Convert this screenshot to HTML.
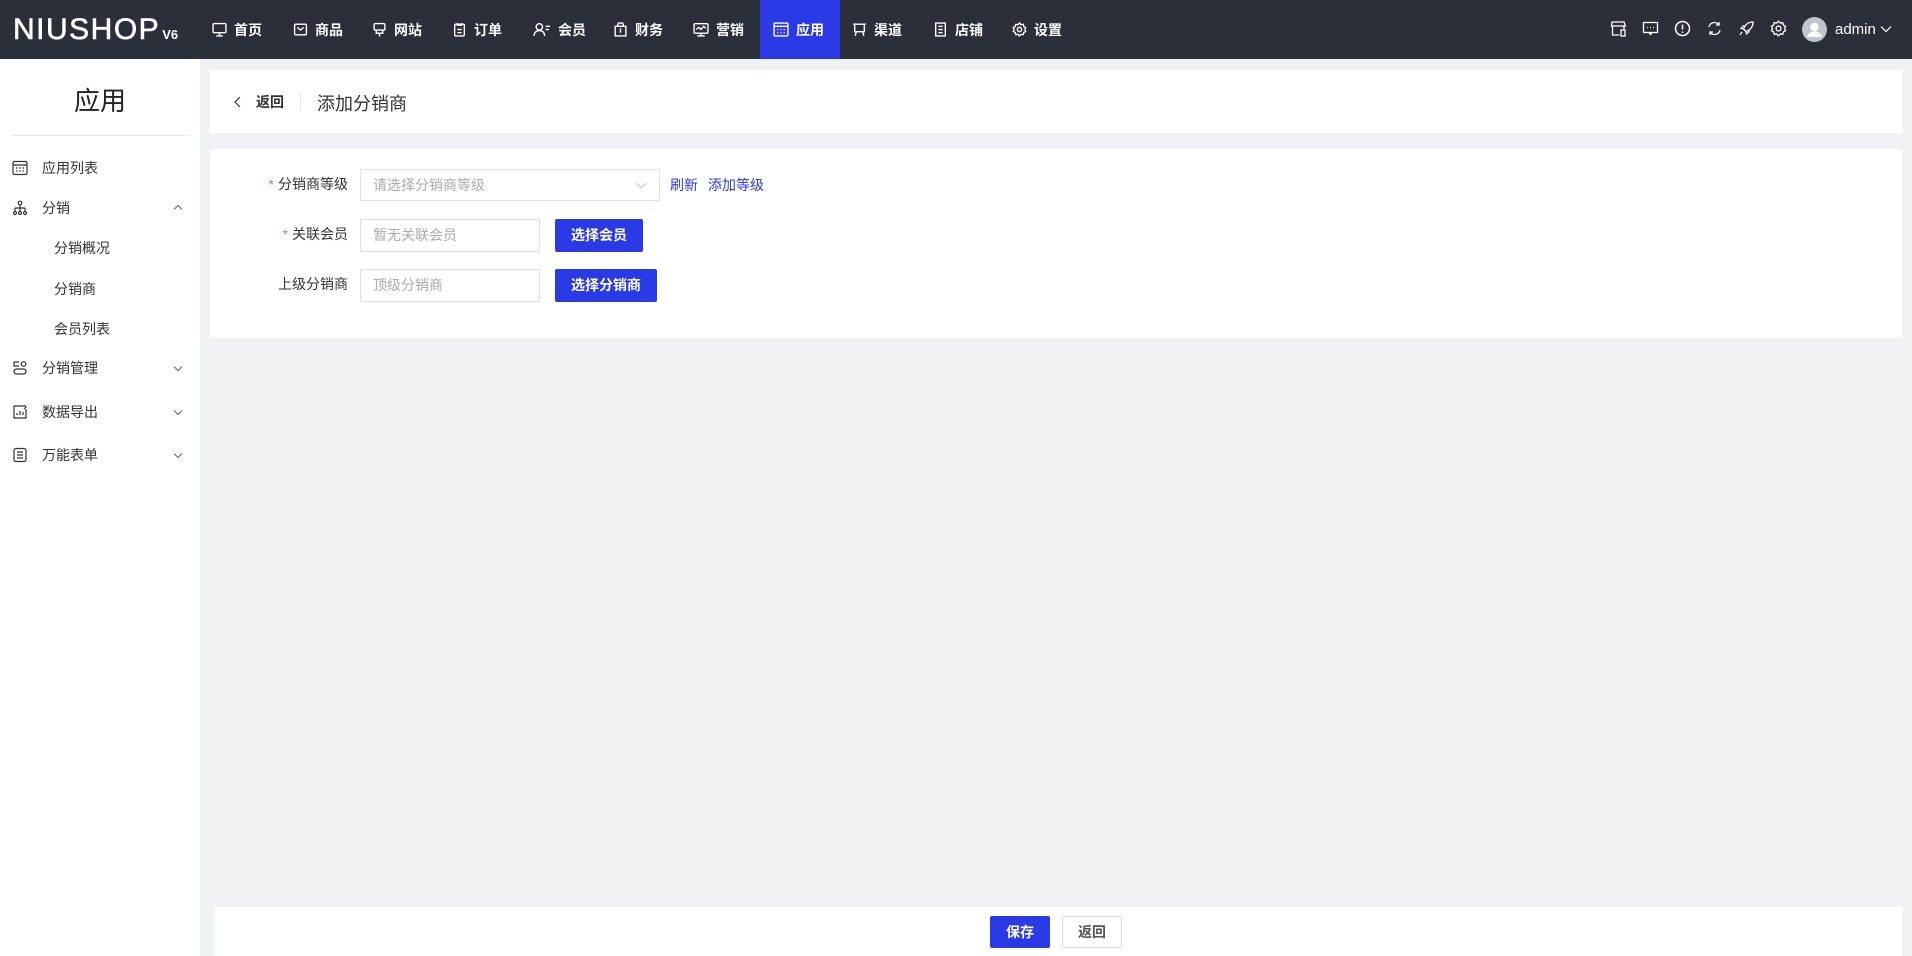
<!DOCTYPE html>
<html><head><meta charset="utf-8"><style>
*{box-sizing:border-box;margin:0;padding:0}
body{width:1912px;height:956px;overflow:hidden;background:#f0f2f5;font-family:"Liberation Sans","Noto Sans CJK SC",sans-serif;color:#333;font-size:14px;position:relative}
.top{position:absolute;left:0;top:0;width:1912px;height:59px;background:#2b2f3a;color:#fff}
.logo{position:absolute;left:13px;top:13px;font-size:30px;font-weight:normal;letter-spacing:1.5px;color:#fff;-webkit-text-stroke:0.6px #fff}
.logo small{font-size:13px;margin-left:2px;letter-spacing:0;font-weight:bold;-webkit-text-stroke:0}
.nav{position:absolute;top:0;height:59px;display:flex;align-items:center;font-size:14px;font-weight:bold;color:#fff}
.nav svg{margin-right:7px}
.active{position:absolute;left:760px;top:0;width:80px;height:59px;background:#2a3ae6}
.ri{position:absolute;top:20px}
.side{position:absolute;left:0;top:59px;width:200px;height:897px;background:#fff}
.side h1{position:absolute;left:0;width:200px;top:22px;text-align:center;font-size:26px;font-weight:normal;color:#222}
.side .hr{position:absolute;left:12px;top:76px;width:177px;height:1px;background:#e8e8e8}
.mi{position:absolute;left:0;width:200px;height:20px;line-height:20px;font-size:14px;color:#333}
.mi svg{position:absolute;left:12px;top:2px}
.mi .t{position:absolute;left:42px}
.mi .s{position:absolute;left:54px}
.card1{position:absolute;left:210px;top:70px;width:1692px;height:63px;background:#fff}
.card2{position:absolute;left:210px;top:149px;width:1692px;height:189px;background:#fff}
.lab{position:absolute;text-align:right;width:140px;left:208px;font-size:14px;color:#333;line-height:20px}
.lab i{color:#f56c6c;font-style:normal;margin-right:4px}
.inp{position:absolute;border:1px solid #dcdfe6;background:#fff;color:#a8abb2;padding-left:12px;font-size:14px}
.btn{position:absolute;background:#2a3ae6;color:#fff;font-weight:bold;font-size:14px;text-align:center;border-radius:2px}
.foot{position:absolute;left:215px;top:907px;width:1687px;height:49px;background:#fff}
</style></head><body>
<div class="top">
 <div class="logo">NIUSHOP<small>V6</small></div>
 <div class="active"></div>
 <div class="nav" style="left:212px"><svg width="15" height="15" viewBox="0 0 14 14" fill="none" stroke="#fff" stroke-width="1.3"><rect x="1" y="1.5" width="12" height="8.5" rx="1"/><path d="M7 10v3M4 13h6"/></svg>首页</div>
 <div class="nav" style="left:293px"><svg width="15" height="15" viewBox="0 0 14 14" fill="none" stroke="#fff" stroke-width="1.3"><rect x="1.5" y="2" width="11" height="10" rx="1"/><path d="M4 5l3 2.5L10 5"/></svg>商品</div>
 <div class="nav" style="left:372px"><svg width="15" height="15" viewBox="0 0 14 14" fill="none" stroke="#fff" stroke-width="1.3"><rect x="2" y="1.5" width="10" height="6" rx="1"/><path d="M4 7.5v3h6v-3M7 10.5v3"/></svg>网站</div>
 <div class="nav" style="left:452px"><svg width="15" height="15" viewBox="0 0 14 14" fill="none" stroke="#fff" stroke-width="1.3"><rect x="2.5" y="2" width="9" height="11" rx="1"/><path d="M5 1v2h4V1M5 7h4M5 10h4"/></svg>订单</div>
 <div class="nav" style="left:533px"><svg width="18" height="15" viewBox="0 0 17 14" fill="none" stroke="#fff" stroke-width="1.3"><circle cx="6" cy="4.5" r="3"/><path d="M1 13c0-3 2-5 5-5s5 2 5 5M12 4h4M12 7h3"/></svg>会员</div>
 <div class="nav" style="left:613px"><svg width="15" height="15" viewBox="0 0 14 14" fill="none" stroke="#fff" stroke-width="1.3"><path d="M2 4h10v9H2zM4 4l1-3h4l1 3M7 6v4"/></svg>财务</div>
 <div class="nav" style="left:693px"><svg width="16" height="15" viewBox="0 0 15 14" fill="none" stroke="#fff" stroke-width="1.3"><rect x="1" y="1.5" width="13" height="9" rx="1"/><path d="M3 7l2.5-2 2 2 2.5-3 2 2M7.5 10.5v2.5M4 13h7"/></svg>营销</div>
 <div class="nav" style="left:773px"><svg width="16" height="15" viewBox="0 0 15 14" fill="none" stroke="#fff" stroke-width="1.3"><rect x="1" y="1" width="13" height="12" rx="1"/><path d="M1 4h13M4 7h1M7 7h1M10 7h1M4 10h1M7 10h1M10 10h1"/></svg>应用</div>
 <div class="nav" style="left:852px"><svg width="15" height="15" viewBox="0 0 14 14" fill="none" stroke="#fff" stroke-width="1.3"><path d="M1 2h12M2.5 2v7h9V2M4 9l-1 4M10 9l1 4"/></svg>渠道</div>
 <div class="nav" style="left:933px"><svg width="15" height="15" viewBox="0 0 14 14" fill="none" stroke="#fff" stroke-width="1.3"><rect x="2.5" y="1" width="9" height="12"/><path d="M5 4h4M5 7h4M5 10h4"/></svg>店铺</div>
 <div class="nav" style="left:1012px"><svg width="15" height="15" viewBox="0 0 14 14" fill="none" stroke="#fff" stroke-width="1.3"><circle cx="7" cy="7" r="2"/><path d="M7 1l1.5 1.5 2-.3.5 2 1.8 1L12 7l.8 1.8-1.8 1-.5 2-2-.3L7 13l-1.5-1.5-2 .3-.5-2-1.8-1L2 7l-.8-1.8 1.8-1 .5-2 2 .3z"/></svg>设置</div>
 <svg class="ri" style="left:1610px" width="17" height="17" viewBox="0 0 17 17" fill="none" stroke="#fff" stroke-width="1.3"><path d="M2 2h12l1.5 4h-14zM2.5 6v9h7M14 6v3"/><rect x="11" y="10" width="4" height="6"/></svg>
 <svg class="ri" style="left:1642px" width="17" height="17" viewBox="0 0 17 17" fill="none" stroke="#fff" stroke-width="1.3"><rect x="1.5" y="2.5" width="14" height="10"/><path d="M7 12.5l1.5 2 1.5-2M5 7.5h1M8 7.5h1M11 7.5h1"/></svg>
 <svg class="ri" style="left:1674px" width="17" height="17" viewBox="0 0 17 17" fill="none" stroke="#fff" stroke-width="1.5"><circle cx="8.5" cy="8.5" r="7"/><path d="M8.5 4.5v5M8.5 11.5v1.5"/></svg>
 <svg class="ri" style="left:1706px" width="17" height="17" viewBox="0 0 17 17" fill="none" stroke="#fff" stroke-width="1.3"><path d="M3 7a5.5 5.5 0 0 1 10-2M14 10a5.5 5.5 0 0 1-10 2M13 2v3h-3M4 15v-3h3"/></svg>
 <svg class="ri" style="left:1738px" width="17" height="17" viewBox="0 0 17 17" fill="none" stroke="#fff" stroke-width="1.3"><path d="M15 2c-5 0-8 3-9.5 7l2.5 2.5C12 10 15 7 15 2zM5.5 9L3 8.5l2-2.5h2.5M8 11.5l.5 2.5 2.5-2v-2.5M4 12l-2 3"/></svg>
 <svg class="ri" style="left:1770px" width="17" height="17" viewBox="0 0 14 14" fill="none" stroke="#fff" stroke-width="1.1"><circle cx="7" cy="7" r="2"/><path d="M7 1l1.5 1.5 2-.3.5 2 1.8 1L12 7l.8 1.8-1.8 1-.5 2-2-.3L7 13l-1.5-1.5-2 .3-.5-2-1.8-1L2 7l-.8-1.8 1.8-1 .5-2 2 .3z"/></svg>
 <svg style="position:absolute;left:1802px;top:17px" width="25" height="25" viewBox="0 0 25 25"><circle cx="12.5" cy="12.5" r="12.5" fill="#c0c4cc"/><circle cx="12.5" cy="10" r="4.2" fill="#fff"/><path d="M5 20c1-4 4-5.5 7.5-5.5S19 16 20 20z" fill="#fff"/></svg>
 <div style="position:absolute;left:1835px;top:21px;font-size:15px;color:#fff">admin</div>
 <svg style="position:absolute;left:1880px;top:25px" width="12" height="8" viewBox="0 0 12 8" fill="none" stroke="#fff" stroke-width="1.2"><path d="M1 1.5l5 5 5-5"/></svg>
</div>

<div class="side">
 <h1>应用</h1><div class="hr"></div>
 <div class="mi" style="top:99px"><svg width="16" height="16" viewBox="0 0 16 16" fill="none" stroke="#333" stroke-width="1.2"><rect x="1" y="1.5" width="14" height="13" rx="1.5"/><path d="M1 5h14M4 8h1.5M7.3 8h1.5M10.5 8H12M4 11h1.5M7.3 11h1.5M10.5 11H12"/></svg><span class="t">应用列表</span></div>
 <div class="mi" style="top:139px"><svg width="16" height="16" viewBox="0 0 16 16" fill="none" stroke="#333" stroke-width="1.2"><circle cx="8" cy="3" r="1.8"/><path d="M8 5v3M3 8h10M3 8v3M8 8v3M13 8v3"/><circle cx="3" cy="13" r="1.5"/><circle cx="8" cy="13" r="1.5"/><circle cx="13" cy="13" r="1.5"/></svg><span class="t">分销</span><svg style="left:173px;top:6px" width="10" height="7" viewBox="0 0 10 7" fill="none" stroke="#666" stroke-width="1.1"><path d="M1 5.5l4-4 4 4"/></svg></div>
 <div class="mi" style="top:179px"><span class="s">分销概况</span></div>
 <div class="mi" style="top:220px"><span class="s">分销商</span></div>
 <div class="mi" style="top:260px"><span class="s">会员列表</span></div>
 <div class="mi" style="top:299px"><svg width="16" height="16" viewBox="0 0 16 16" fill="none" stroke="#333" stroke-width="1.2"><path d="M2 2h5M2 2v4h5"/><circle cx="11.5" cy="4" r="2.3"/><rect x="2" y="9" width="12" height="5" rx="2.5"/></svg><span class="t">分销管理</span><svg style="left:173px;top:7px" width="10" height="7" viewBox="0 0 10 7" fill="none" stroke="#666" stroke-width="1.1"><path d="M1 1.5l4 4 4-4"/></svg></div>
 <div class="mi" style="top:343px"><svg width="16" height="16" viewBox="0 0 16 16" fill="none" stroke="#333" stroke-width="1.2"><path d="M12 2H2v12h12V5M5 11V9M8 11V7M11 11V8M12 1l2 2-2 2"/></svg><span class="t">数据导出</span><svg style="left:173px;top:7px" width="10" height="7" viewBox="0 0 10 7" fill="none" stroke="#666" stroke-width="1.1"><path d="M1 1.5l4 4 4-4"/></svg></div>
 <div class="mi" style="top:386px"><svg width="16" height="16" viewBox="0 0 16 16" fill="none" stroke="#333" stroke-width="1.2"><rect x="2" y="1.5" width="12" height="13" rx="2"/><path d="M5 5h6M5 8h6M5 11h6"/></svg><span class="t">万能表单</span><svg style="left:173px;top:7px" width="10" height="7" viewBox="0 0 10 7" fill="none" stroke="#666" stroke-width="1.1"><path d="M1 1.5l4 4 4-4"/></svg></div>
</div>

<div class="card1">
 <svg style="position:absolute;left:24px;top:26px" width="8" height="12" viewBox="0 0 8 12" fill="none" stroke="#333" stroke-width="1.2"><path d="M6 1L1 6l5 5"/></svg>
 <div style="position:absolute;left:46px;top:22px;font-size:14px;font-weight:bold;color:#333">返回</div>
 <div style="position:absolute;left:90px;top:23px;width:1px;height:18px;background:#e4e4e4"></div>
 <div style="position:absolute;left:107px;top:20px;font-size:18px;color:#333">添加分销商</div>
</div>

<div class="card2"></div>
<div class="lab" style="top:174px"><i>*</i>分销商等级</div>
<div class="inp" style="left:360px;top:169px;width:300px;height:32px;line-height:30px">请选择分销商等级<svg style="position:absolute;right:12px;top:12px" width="12" height="7" viewBox="0 0 12 7" fill="none" stroke="#c0c4cc" stroke-width="1.1"><path d="M1 1l5 5 5-5"/></svg></div>
<div style="position:absolute;left:670px;top:175px;color:#2a3ae6;font-size:14px">刷新</div>
<div style="position:absolute;left:708px;top:175px;color:#2a3ae6;font-size:14px">添加等级</div>

<div class="lab" style="top:224px"><i>*</i>关联会员</div>
<div class="inp" style="left:360px;top:219px;width:180px;height:33px;line-height:31px">暂无关联会员</div>
<div class="btn" style="left:555px;top:219px;width:88px;height:33px;line-height:33px">选择会员</div>

<div class="lab" style="top:274px">上级分销商</div>
<div class="inp" style="left:360px;top:269px;width:180px;height:33px;line-height:31px">顶级分销商</div>
<div class="btn" style="left:555px;top:269px;width:102px;height:33px;line-height:33px">选择分销商</div>

<div class="foot">
 <div class="btn" style="left:775px;top:9px;width:60px;height:32px;line-height:32px">保存</div>
 <div style="position:absolute;left:847px;top:9px;width:60px;height:32px;line-height:30px;border:1px solid #dcdfe6;text-align:center;font-weight:bold;color:#555;border-radius:2px">返回</div>
</div>
</body></html>
